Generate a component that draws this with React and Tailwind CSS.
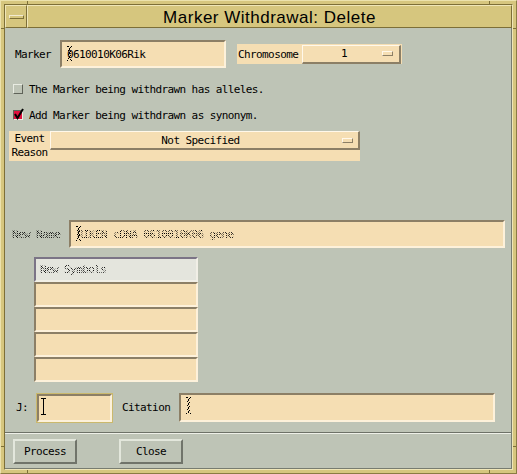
import React from "react";

function IBeam({ stipple = false, h = 17 }) {
  const c = "#000";
  return (
    <svg width="6" height={h} viewBox={`0 0 6 ${h}`} className="block">
      {stipple ? (
        <g fill={c}>
          {Array.from({ length: Math.floor(h / 2) }).map((_, i) => (
            <rect key={i} x={i % 2 === 0 ? 1 : 2} y={i * 2} width="1" height="1" />
          ))}
          <rect x="0" y="0" width="1" height="1" />
          <rect x="4" y="0" width="1" height="1" />
          <rect x="0" y={h - 1} width="1" height="1" />
          <rect x="4" y={h - 1} width="1" height="1" />
          {Array.from({ length: Math.floor(h / 2) }).map((_, i) => (
            <rect key={"b" + i} x={i % 2 === 0 ? 3 : 2} y={i * 2 + 1} width="1" height="1" />
          ))}
        </g>
      ) : (
        <g fill={c}>
          <rect x="0" y="0" width="5" height="1" />
          <rect x="2" y="0" width="1" height={h} />
          <rect x="0" y={h - 1} width="5" height="1" />
        </g>
      )}
    </svg>
  );
}

const stip =
  "bg-[repeating-conic-gradient(#000_0_25%,transparent_0_50%)] bg-[length:2px_2px] bg-clip-text text-transparent";

function Indicator() {
  return (
    <div className="w-[11px] h-[5px] bg-[#f5deb3] border-t border-l border-[#fff8ea] border-b-[#8c7f66] border-r-[#8c7f66] border-b border-r" />
  );
}

function Field({ className = "", children }) {
  return (
    <div
      className={
        "relative bg-[#f5deb3] border-2 border-t-[#8c7f66] border-l-[#8c7f66] border-b-[#fdf1da] border-r-[#fdf1da] flex items-center " +
        className
      }
    >
      {children}
    </div>
  );
}

function Row() {
  return (
    <div className="h-[25px] bg-[#f5deb3] border-2 border-t-[#8c7f66] border-l-[#8c7f66] border-b-[#fdf1da] border-r-[#fdf1da]" />
  );
}

function Button({ children, className = "" }) {
  return (
    <div
      className={
        "w-[64px] h-[25px] flex items-center justify-center border-2 border-t-[#e3e7dc] border-l-[#e3e7dc] border-b-[#70746a] border-r-[#70746a] " +
        className
      }
    >
      {children}
    </div>
  );
}

export default function App() {
  return (
    <div className="relative w-[517px] h-[474px] bg-[#d6c67e] p-[4px] overflow-hidden text-black font-['DejaVu_Sans_Mono',monospace] text-[11px] tracking-[-0.6px] leading-none">
      {/* frame resize notches */}
      <div className="absolute left-[27px] top-0 w-px h-[4px] bg-[#7d6f38]" />
      <div className="absolute left-[489px] top-0 w-px h-[4px] bg-[#7d6f38]" />
      <div className="absolute left-[27px] bottom-0 w-px h-[4px] bg-[#7d6f38]" />
      <div className="absolute left-[489px] bottom-0 w-px h-[4px] bg-[#7d6f38]" />
      <div className="absolute left-0 top-[28px] h-px w-[4px] bg-[#7d6f38]" />
      <div className="absolute right-0 top-[28px] h-px w-[4px] bg-[#7d6f38]" />
      <div className="absolute left-0 top-[446px] h-px w-[4px] bg-[#7d6f38]" />
      <div className="absolute right-0 top-[446px] h-px w-[4px] bg-[#7d6f38]" />
      <div className="absolute inset-0 border border-t-[#ece2ad] border-l-[#ece2ad] border-b-[#8a7c42] border-r-[#8a7c42] pointer-events-none" />

      <div className="flex flex-col h-full border border-t-[#7d6f38] border-l-[#7d6f38] border-b-[#efe6b8] border-r-[#efe6b8]">
        {/* title bar */}
        <div className="flex h-[23px] shrink-0">
          <div className="w-[22px] h-full flex items-center justify-center border border-t-[#efe6b8] border-l-[#efe6b8] border-b-[#7d6f38] border-r-[#7d6f38]">
            <div className="w-[15px] h-[4px] border border-t-[#f2ead0] border-l-[#f2ead0] border-b-[#7d6f38] border-r-[#7d6f38]" />
          </div>
          <div className="flex-1 h-full flex items-center justify-center border border-t-[#efe6b8] border-l-[#efe6b8] border-b-[#7d6f38] border-r-[#7d6f38] font-['Liberation_Sans',sans-serif] text-[17px] tracking-[0.5px] pt-[1px]">
            Marker Withdrawal: Delete
          </div>
        </div>

        {/* body */}
        <div className="flex-1 flex flex-col bg-[#bec4b6] border-r border-b border-[#777c70]">
          {/* marker row */}
          <div className="flex items-center mt-[12px] h-[28px]">
            <div className="ml-[10px] w-[45px]">Marker</div>
            <Field className="w-[166px] h-[28px]">
              <div className="absolute left-[5px] top-[4px]">
                <IBeam stipple h={15} />
              </div>
              <span className="ml-[5px] mt-[1px]">0610010K06Rik</span>
            </Field>
            <div className="ml-[11px] w-[165px] h-[20px] bg-[#f5deb3] flex items-center">
              <span className="ml-[1px] w-[64px]">Chromosome</span>
              <div className="w-[99px] h-[19px] flex items-center border border-t-[#fff8ea] border-l-[#fff8ea] border-b-[#8c7f66] border-r-[#8c7f66] border-b-2 border-r-2">
                <span className="flex-1 text-center pl-[3px]">1</span>
                <Indicator />
                <div className="w-[6px]" />
              </div>
            </div>
          </div>

          {/* checkbox 1 */}
          <div className="flex items-center mt-[13px] h-[16px]">
            <div className="ml-[8px] w-[10px] h-[10px] bg-[#bec4b6] border border-t-[#e9ece2] border-l-[#e9ece2] border-b-[#5f6359] border-r-[#5f6359]" />
            <span className="ml-[6px]">The Marker being withdrawn has alleles.</span>
          </div>

          {/* checkbox 2 */}
          <div className="flex items-center mt-[10px] h-[16px]">
            <div className="relative ml-[8px] w-[10px] h-[10px] bg-[#e0103e] border border-t-[#5f6359] border-l-[#5f6359] border-b-[#e9ece2] border-r-[#e9ece2]">
              <svg className="absolute left-[0px] top-[-3px]" width="10" height="12" viewBox="0 0 10 12">
                <path d="M1 6 L3.5 10 L9 1" stroke="#000" strokeWidth="2" fill="none" />
              </svg>
            </div>
            <span className="ml-[6px]">Add Marker being withdrawn as synonym.</span>
          </div>

          {/* event reason */}
          <div className="ml-[4px] mt-[8px] w-[351px] h-[30px] bg-[#f5deb3] flex items-start">
            <div className="w-[41px] flex flex-col items-center leading-[14px] pt-[1px] text-[11px]">
              <span>Event</span>
              <span>Reason</span>
            </div>
            <div className="flex-1 h-[19px] flex items-center border border-t-[#fff8ea] border-l-[#fff8ea] border-b-[#8c7f66] border-r-[#8c7f66] border-b-2 border-r-2">
              <span className="flex-1 text-center pl-[8px]">Not Specified</span>
              <Indicator />
              <div className="w-[5px]" />
            </div>
          </div>

          {/* new name */}
          <div className="flex items-center mt-[59px] h-[28px]">
            <div className={"ml-[7px] w-[57px] " + stip}>New Name</div>
            <Field className="w-[436px] h-[28px]">
              <div className="absolute left-[5px] top-[4px]">
                <IBeam stipple h={15} />
              </div>
              <span className={"ml-[6px] mt-[1px] " + stip}>RIKEN cDNA 0610010K06 gene</span>
            </Field>
          </div>

          {/* new symbols table */}
          <div className="ml-[29px] mt-[9px] w-[164px] flex flex-col">
            <div className="h-[25px] bg-[#e4e5dd] border-2 border-t-[#7b7486] border-l-[#7b7486] border-b-[#f1efe6] border-r-[#f1efe6] flex items-center">
              <span className={"ml-[4px] " + stip}>New Symbols</span>
            </div>
            <Row />
            <Row />
            <Row />
            <Row />
          </div>

          {/* J / citation */}
          <div className="flex items-center mt-[11px] h-[29px]">
            <div className="ml-[11px] w-[20px]">J:</div>
            <div className="w-[77px] h-[30px] border border-[#cbb96c] p-0">
              <Field className="w-full h-full">
                <div className="absolute left-[2px] top-[2px]">
                  <IBeam h={17} />
                </div>
              </Field>
            </div>
            <div className="ml-[9px] w-[57px]">Citation</div>
            <Field className="w-[316px] h-[29px]">
              <div className="absolute left-[5px] top-[2px]">
                <IBeam stipple h={17} />
              </div>
            </Field>
          </div>

          {/* separator */}
          <div className="mt-[10px] h-px bg-[#6e7268]" />
          <div className="h-px bg-[#eef0e8]" />

          {/* buttons */}
          <div className="flex items-center mt-[5px]">
            <Button className="ml-[8px]">Process</Button>
            <Button className="ml-[42px]">Close</Button>
          </div>
        </div>
      </div>
    </div>
  );
}
